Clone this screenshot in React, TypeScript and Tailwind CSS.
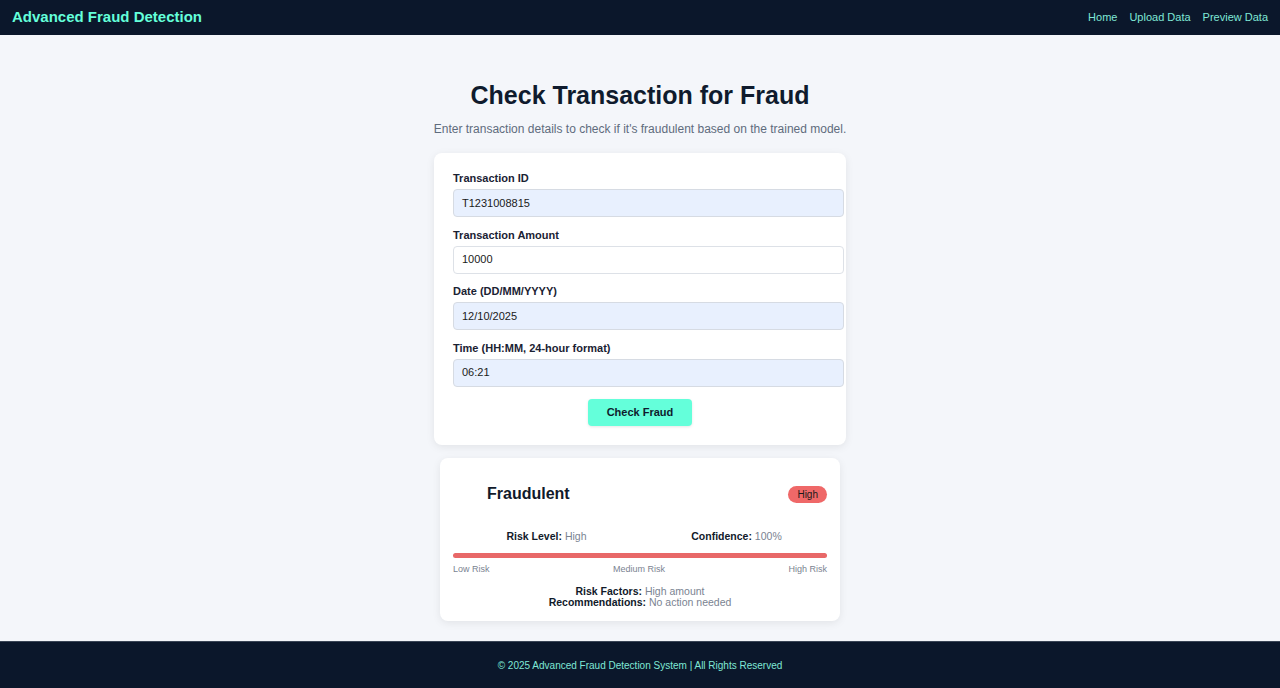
import React from "react";

function Field({ label, value, autofill }: { label: string; value: string; autofill?: boolean }) {
  return (
    <div className="flex flex-col">
      <label className="text-[11px] font-bold text-[#1a2233] leading-[14px] mb-[4px]">{label}</label>
      <div
        className={
          "w-[391px] h-[28px] rounded-[4px] border flex items-center px-[8px] text-[11px] text-[#1a1a1a] " +
          (autofill ? "bg-[#e8f0fe] border-[#d6dbe3]" : "bg-white border-[#dde1e7]")
        }
      >
        {value}
      </div>
    </div>
  );
}

export default function App() {
  return (
    <div className="min-h-[688px] flex flex-col bg-[#f4f6fa] font-['Liberation_Sans',Arial,sans-serif]">
      <header className="h-[35px] bg-[#0b172b] flex items-center justify-between px-[12px]">
        <div className="text-[15px] font-bold text-[#64ffda]">Advanced Fraud Detection</div>
        <nav className="flex gap-[12px] text-[11px] text-[#7fe8d6]">
          <span>Home</span>
          <span>Upload Data</span>
          <span>Preview Data</span>
        </nav>
      </header>

      <main className="flex-1 flex flex-col items-center pt-[45px]">
        <h1 className="text-[25px] font-bold text-[#0f1b2d] leading-[30px]">Check Transaction for Fraud</h1>
        <p className="mt-[11px] text-[12px] text-[#5f6c7d] leading-[16px]">
          Enter transaction details to check if it's fraudulent based on the trained model.
        </p>

        <div className="mt-[16px] w-[412px] bg-white rounded-[8px] shadow-[0_2px_8px_rgba(0,0,0,0.08)] pl-[19px] pt-[18px] pb-[19px] flex flex-col gap-[10.5px]">
          <Field label="Transaction ID" value="T1231008815" autofill />
          <Field label="Transaction Amount" value="10000" />
          <Field label="Date (DD/MM/YYYY)" value="12/10/2025" autofill />
          <Field label="Time (HH:MM, 24-hour format)" value="06:21" autofill />
          <div className="flex justify-center mt-[2px] pr-[19px]">
            <button className="w-[104px] h-[27px] rounded-[4px] bg-[#64ffda] text-[11px] font-bold text-[#0f1b2d] shadow-[0_1px_3px_rgba(0,0,0,0.1)]">
              Check Fraud
            </button>
          </div>
        </div>

        <div className="mt-[13px] w-[400px] bg-white rounded-[8px] shadow-[0_2px_8px_rgba(0,0,0,0.08)] px-[13px] pt-[24px] pb-[13px]">
          <div className="flex items-center justify-between">
            <div className="flex items-center">
              <div className="w-[34px] h-[24px]" />
              <span className="text-[16px] font-bold text-[#111a2a]">Fraudulent</span>
            </div>
            <span className="rounded-full bg-[#ef6868] px-[9px] h-[17px] flex items-center text-[10px] text-[#1a1a1a]">High</span>
          </div>

          <div className="mt-[23px] grid grid-cols-2 text-[10.5px] leading-[14px]">
            <div className="text-center">
              <span className="font-bold text-[#111a2a]">Risk Level:</span> <span className="text-[#7a8391]">High</span>
            </div>
            <div className="text-center pl-[6px]">
              <span className="font-bold text-[#111a2a]">Confidence:</span> <span className="text-[#7a8391]">100%</span>
            </div>
          </div>

          <div className="mt-[10px] h-[5px] rounded-full bg-[#e86868]" />
          <div className="mt-[5px] flex justify-between text-[9px] text-[#7a8391] leading-[12px]">
            <span>Low Risk</span>
            <span>Medium Risk</span>
            <span>High Risk</span>
          </div>

          <div className="mt-[11px] flex flex-col items-center text-[10.5px] leading-[11px]">
            <div>
              <span className="font-bold text-[#111a2a]">Risk Factors:</span> <span className="text-[#7a8391]">High amount</span>
            </div>
            <div>
              <span className="font-bold text-[#111a2a]">Recommendations:</span> <span className="text-[#7a8391]">No action needed</span>
            </div>
          </div>
        </div>
      </main>

      <footer className="h-[47px] bg-[#0b172b] border-t border-[#3a4556] flex items-center justify-center text-[10px] text-[#7fe8d6]">
        © 2025 Advanced Fraud Detection System | All Rights Reserved
      </footer>
    </div>
  );
}
